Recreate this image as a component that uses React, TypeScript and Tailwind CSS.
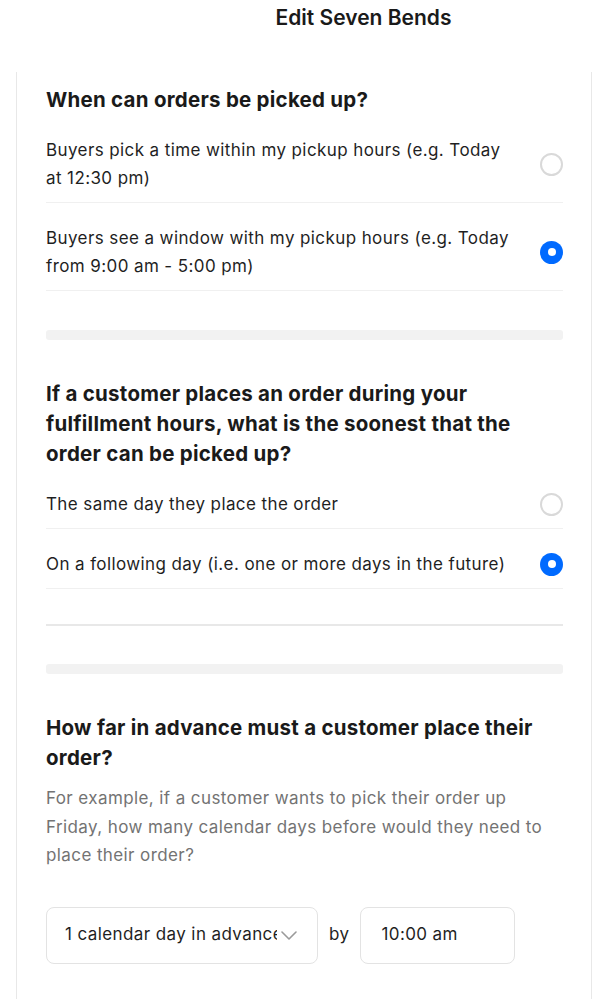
import { useState } from "react";

type Option = { id: string; label: string };

const pickupModes: Option[] = [
  { id: "time", label: "Buyers pick a time within my pickup hours (e.g. Today at 12:30 pm)" },
  { id: "window", label: "Buyers see a window with my pickup hours (e.g. Today from 9:00 am - 5:00 pm)" },
];

const soonestOptions: Option[] = [
  { id: "same", label: "The same day they place the order" },
  { id: "following", label: "On a following day (i.e. one or more days in the future)" },
];

function Radio({ checked }: { checked: boolean }) {
  return checked ? (
    <span className="flex h-[23px] w-[23px] shrink-0 items-center justify-center rounded-full bg-[#006aff]">
      <span className="h-[8px] w-[8px] rounded-full bg-white" />
    </span>
  ) : (
    <span className="h-[23px] w-[23px] shrink-0 rounded-full border-2 border-[#d9d9d9]" />
  );
}

function RadioGroup({
  options,
  value,
  onChange,
}: {
  options: Option[];
  value: string;
  onChange: (id: string) => void;
}) {
  return (
    <div>
      {options.map(opt => (
        <div
          key={opt.id}
          onClick={() => onChange(opt.id)}
          className="cursor-pointer border-b border-[#f0f0f0] pt-[21px] pb-[10px]"
        >
          <div className="flex items-center gap-[24px]">
            <p className="flex-1 text-[17px] leading-[28px] tracking-[0.4px] text-[#1f1f1f]">{opt.label}</p>
            <Radio checked={value === opt.id} />
          </div>
        </div>
      ))}
    </div>
  );
}

function Heading({ children }: { children: React.ReactNode }) {
  return (
    <h2 className="text-[20.5px] leading-[30px] font-bold tracking-[0.25px] text-[#1a1a1a]">{children}</h2>
  );
}

export default function App() {
  const [mode, setMode] = useState("window");
  const [soonest, setSoonest] = useState("following");

  return (
    <div className="min-h-[999px] bg-white font-['Inter',sans-serif]">
      {/* Header */}
      <div className="flex h-[36px] items-center justify-center pl-[123px]">
        <h1 className="text-[21px] font-semibold text-[#1a1a1a]">Edit Seven Bends</h1>
      </div>

      {/* Card */}
      <div className="ml-[16px] mr-[12px] mt-[36px] border-x border-[#e8e8e8] bg-white pl-[29px] pr-[28px] pt-[13px] pb-[40px]">
        <Heading>When can orders be picked up?</Heading>
        <RadioGroup options={pickupModes} value={mode} onChange={setMode} />

        <div className="mt-[39px] mb-[39px] h-[10px] rounded-[3px] bg-[#f2f2f2]" />

        <Heading>
          If a customer places an order during your fulfillment hours, what is the soonest that the order can be
          picked up?
        </Heading>
        <RadioGroup options={soonestOptions} value={soonest} onChange={setSoonest} />

        <div className="mt-[35px] h-[2px] bg-[#e8e8e8]" />
        <div className="mt-[38px] mb-[39px] h-[10px] rounded-[3px] bg-[#f2f2f2]" />

        <Heading>How far in advance must a customer place their order?</Heading>
        <p className="mt-[11px] text-[17px] leading-[28.5px] tracking-[0.4px] text-[#737373]">
          For example, if a customer wants to pick their order up Friday, how many calendar days before would they
          need to place their order?
        </p>

        {/* Advance selector */}
        <div className="mt-[37px] flex items-center">
          <div className="flex h-[57px] w-[272px] items-center rounded-[8px] border border-[#e3e3e3] pl-[18px] pr-[20px]">
            <span className="flex-1 overflow-hidden whitespace-nowrap text-[17px] tracking-[0.4px] text-[#1f1f1f]">
              1 calendar day in advance
            </span>
            <svg width="16" height="9" viewBox="0 0 16 9" fill="none" className="ml-[4px] shrink-0">
              <path d="M1 1l7 7 7-7" stroke="#9a9a9a" strokeWidth="1.6" strokeLinecap="round" strokeLinejoin="round" />
            </svg>
          </div>
          <span className="mx-[11px] text-[17px] tracking-[0.4px] text-[#1f1f1f]">by</span>
          <div className="flex h-[57px] w-[155px] items-center rounded-[8px] border border-[#e3e3e3] pl-[20px]">
            <span className="text-[17px] tracking-[0.4px] text-[#1f1f1f]">10:00 am</span>
          </div>
        </div>
      </div>
    </div>
  );
}
